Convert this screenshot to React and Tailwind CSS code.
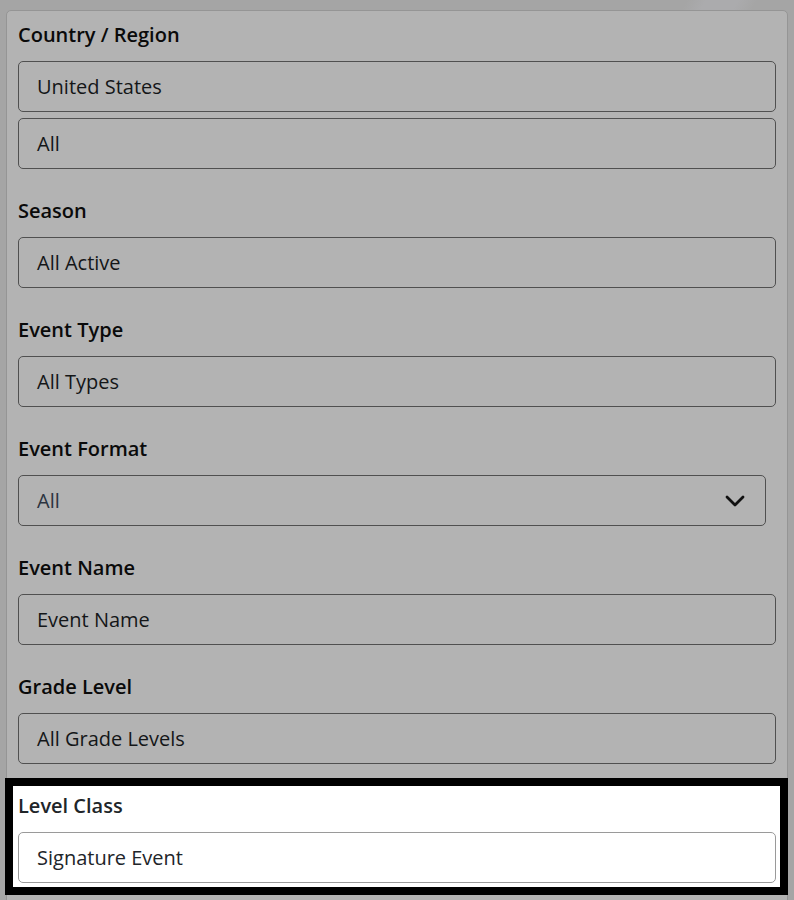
import React from "react";

const font = { fontFamily: '"Open Sans", "Noto Sans", sans-serif' };

function Field({ children, className = "" }) {
  return (
    <div
      className={
        "h-[51px] rounded-[5px] border border-[#505050] flex items-center pl-[18px] pt-[1px] text-[20px] text-[#141618] " +
        className
      }
    >
      {children}
    </div>
  );
}

function Label({ children }) {
  return (
    <div className="text-[20px] leading-6 font-semibold text-[#0a0a0a]">{children}</div>
  );
}

function Section({ label, children }) {
  return (
    <div className="pt-2 pb-1">
      <Label>{label}</Label>
      <div className="mt-[14px]">{children}</div>
    </div>
  );
}

export default function App() {
  return (
    <div
      className="min-h-[900px] h-[900px] overflow-hidden bg-[linear-gradient(118deg,#a5a5a5_0%,#a5a5a5_54%,#ababad_55.5%,#ababad_58%,#a5a5a5_59.5%)] pt-[10px] px-[6px]"
      style={font}
    >
      <div className="rounded-[5px] border border-[#959595] bg-[#b3b3b3] px-[11px] pt-[4px] pb-[20px] flex flex-col gap-[18px]">
        <Section label="Country / Region">
          <Field>United States</Field>
          <Field className="mt-[6px]">All</Field>
        </Section>
        <Section label="Season">
          <Field>All Active</Field>
        </Section>
        <Section label="Event Type">
          <Field>All Types</Field>
        </Section>
        <Section label="Event Format">
          <div className="w-[748px] h-[51px] rounded-[5px] border border-[#505050] flex items-center justify-between pl-[18px] pt-[1px] pr-[20px] text-[20px] text-[#2c3440]">
            <span>All</span>
            <svg width="20" height="12" viewBox="0 0 20 12" fill="none">
              <polyline
                points="2,2 10,10 18,2"
                stroke="#111"
                strokeWidth="2.8"
                strokeLinecap="round"
                strokeLinejoin="round"
              />
            </svg>
          </div>
        </Section>
        <Section label="Event Name">
          <Field className="text-[#3a3f45]">Event Name</Field>
        </Section>
        <Section label="Grade Level">
          <Field>All Grade Levels</Field>
        </Section>
        <div className="-ml-[5px] pl-[5px] -mr-[4px] pr-[4px] pt-2 pb-1 bg-white shadow-[0_0_0_8px_#000]">
          <div className="text-[20px] leading-6 font-semibold text-[#212529]">Level Class</div>
          <div className="mt-[14px] h-[51px] rounded-[5px] border border-[#9a9a9a] flex items-center pl-[18px] pt-[1px] text-[20px] text-[#212529]">
            Signature Event
          </div>
        </div>
      </div>
    </div>
  );
}
